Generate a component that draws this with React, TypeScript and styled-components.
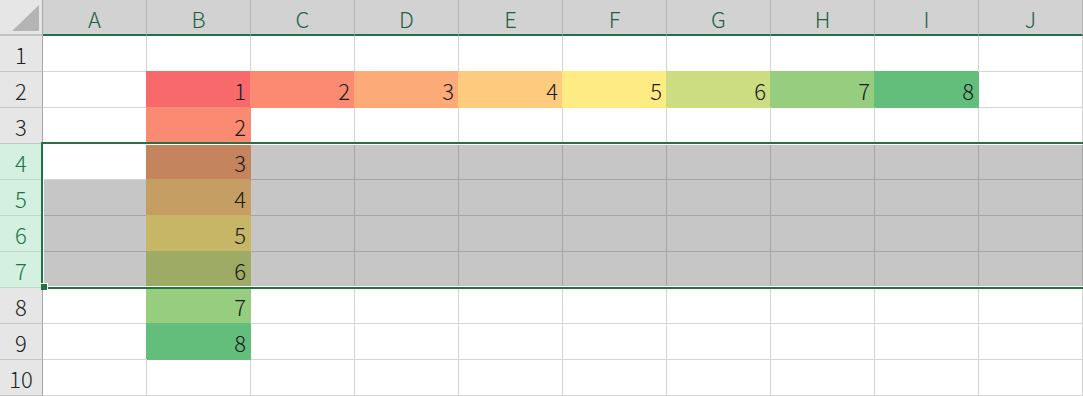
import styled, { createGlobalStyle } from "styled-components";

const GlobalStyle = createGlobalStyle`
  html, body {
    margin: 0;
    padding: 0;
    background: #fff;
    overflow: hidden;
  }
`;

const COLS = ["A", "B", "C", "D", "E", "F", "G", "H", "I", "J"];
const ROWS = [1, 2, 3, 4, 5, 6, 7, 8, 9, 10];
const SEL_ROWS = [4, 5, 6, 7];
const ACTIVE = { row: 4, col: "A" };

// red - yellow - green scale, midpoint at 5
const RED = [248, 105, 107];
const YELLOW = [255, 235, 132];
const GREEN = [99, 190, 123];

function mix(a: number[], b: number[], t: number) {
  return a.map((v, i) => Math.round(v + (b[i] - v) * t));
}

function toHex(c: number[]) {
  return "#" + c.map((v) => v.toString(16).padStart(2, "0")).join("");
}

function scaleColor(v: number, selected: boolean) {
  let c = v <= 5 ? mix(RED, YELLOW, (v - 1) / 4) : mix(YELLOW, GREEN, (v - 5) / 3);
  // selection tint darkens the fill like a multiply with #c6c6c6
  if (selected) c = c.map((x) => Math.round((x * 198) / 255));
  return toHex(c);
}

function valueAt(row: number, col: string): number | undefined {
  const ci = COLS.indexOf(col);
  if (row === 2 && ci >= 1 && ci <= 8) return ci;
  if (col === "B" && row >= 2 && row <= 9) return row - 1;
  return undefined;
}

export default function App() {
  return (
    <>
      <GlobalStyle />
      <Sheet>
        <Corner>
          <svg width="43" height="34" viewBox="0 0 43 34">
            <polygon points="39,5 39,31 12,31" fill="#b4b4b4" />
          </svg>
        </Corner>
        {COLS.map((c) => (
          <ColHeader key={c}>{c}</ColHeader>
        ))}
        {ROWS.map((r) => {
          const rowSel = SEL_ROWS.includes(r);
          return [
            <RowHeader key={`h${r}`} $sel={rowSel}>
              {r}
            </RowHeader>,
            ...COLS.map((c) => {
              const v = valueAt(r, c);
              const isActive = r === ACTIVE.row && c === ACTIVE.col;
              const sel = rowSel && !isActive;
              return (
                <Cell
                  key={`${c}${r}`}
                  $fill={v !== undefined ? scaleColor(v, rowSel) : undefined}
                  $sel={sel}
                >
                  {v}
                </Cell>
              );
            }),
          ];
        })}
        <Selection>
          <FillHandle />
        </Selection>
      </Sheet>
    </>
  );
}

const Sheet = styled.div`
  position: relative;
  display: grid;
  grid-template-columns: 43px repeat(10, 104px);
  grid-template-rows: 36px repeat(10, 36px);
  width: 1083px;
  height: 396px;
  overflow: hidden;
  font-family: "Noto Sans CJK JP", "Noto Sans", sans-serif;
  font-size: 22px;
  font-weight: 300;
  color: #222;
`;

const Corner = styled.div`
  box-sizing: border-box;
  background: #e6e6e6;
  border-right: 1px solid #a6a6a6;
  border-bottom: 2px solid #c2c2c2;
  svg {
    display: block;
  }
`;

const ColHeader = styled.div`
  box-sizing: border-box;
  display: flex;
  align-items: center;
  justify-content: center;
  background: #d2d2d2;
  border-right: 1px solid #b4b4b4;
  border-bottom: 2px solid #217346;
  color: #1d5f45;
  padding-top: 1px;
`;

const RowHeader = styled.div<{ $sel?: boolean }>`
  box-sizing: border-box;
  display: flex;
  align-items: center;
  justify-content: center;
  background: ${(p) => (p.$sel ? "#d3f0e0" : "#e6e6e6")};
  color: ${(p) => (p.$sel ? "#217346" : "#222")};
  border-right: 1px solid #a6a6a6;
  border-bottom: 1px solid ${(p) => (p.$sel ? "#bcd9c9" : "#c4c4c4")};
`;

const Cell = styled.div<{ $fill?: string; $sel?: boolean }>`
  box-sizing: border-box;
  display: flex;
  align-items: center;
  justify-content: flex-end;
  padding: 1px 4px 0 0;
  background: ${(p) => p.$fill ?? (p.$sel ? "#c6c6c6" : "#fff")};
  border-right: 1px solid ${(p) => p.$fill ?? (p.$sel ? "#a5a5a5" : "#d4d4d4")};
  border-bottom: 1px solid ${(p) => p.$fill ?? (p.$sel ? "#a5a5a5" : "#d4d4d4")};
  box-shadow: ${(p) => (p.$fill ? `-1px -1px 0 0 ${p.$fill}` : "none")};
  color: #1a1a1a;
`;

const Selection = styled.div`
  position: absolute;
  left: 41px;
  top: 142px;
  right: -4px;
  height: 147px;
  box-sizing: border-box;
  border: 2px solid #217346;
  box-shadow: inset 0 0 0 1px #fff;
  pointer-events: none;
`;

const FillHandle = styled.div`
  position: absolute;
  left: -2px;
  bottom: -3px;
  width: 7px;
  height: 7px;
  box-sizing: border-box;
  background: #217346;
  border-top: 1px solid #fff;
  border-right: 1px solid #fff;
`;
